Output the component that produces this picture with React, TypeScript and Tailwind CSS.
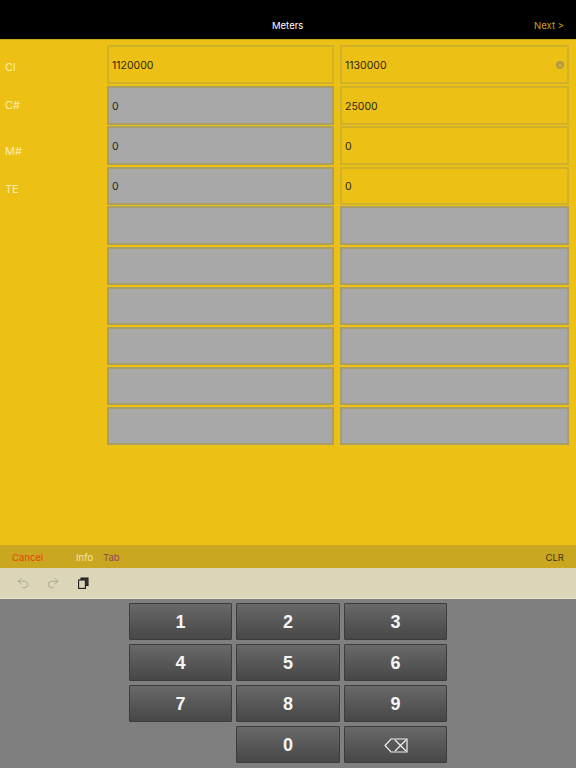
import { Undo2, Redo2 } from 'lucide-react'

const ROWS = [
  { h: 'h-[39px]', mt: 'mt-[5px]', label: 'Cl', labelPt: 'pt-[17px]', left: '1120000', right: '1130000', leftOn: true, rightOn: true, clear: true },
  { h: 'h-[39px]', mt: 'mt-[2px]', label: 'C#', labelPt: 'pt-[14px]', left: '0', right: '25000', rightOn: true },
  { h: 'h-[39px]', mt: 'mt-[1px]', label: 'M#', labelPt: 'pt-[20px]', left: '0', right: '0', rightOn: true },
  { h: 'h-[38px]', mt: 'mt-[2px]', label: 'TE', labelPt: 'pt-[17px]', left: '0', right: '0', rightOn: true },
  { h: 'h-[39px]', mt: 'mt-[1px]' },
  { h: 'h-[38px]', mt: 'mt-[2px]' },
  { h: 'h-[38px]', mt: 'mt-[2px]' },
  { h: 'h-[38px]', mt: 'mt-[2px]' },
  { h: 'h-[38px]', mt: 'mt-[2px]' },
  { h: 'h-[38px]', mt: 'mt-[2px]' },
]

const KEYS = ['1', '2', '3', '4', '5', '6', '7', '8', '9', '', '0', 'del']

function Field({ value, on, clear }: { value?: string; on?: boolean; clear?: boolean }) {
  return (
    <div className={`flex items-center justify-between border-2 pl-[3px] pr-[3px] text-[10.5px] text-[#2c2610] ${on ? 'border-[#d0b22a] bg-[#edc016]' : 'border-[#a89f68] bg-[#a8a8a8]'}`}>
      <span className="translate-y-[1px]">{value}</span>
      {clear && (
        <span className="flex h-[8px] w-[8px] items-center justify-center rounded-full bg-[#b39a45] text-[7px] leading-none text-[#e6c02a]">×</span>
      )}
    </div>
  )
}

function BackspaceIcon() {
  return (
    <svg width="24" height="15" viewBox="0 0 24 15" fill="none" stroke="#f2f2f2" strokeWidth="1.2">
      <path d="M7 1 H23 V14 H7 L1 7.5 Z" />
      <path d="M11 2 L22 13 M22 2 L11 13" />
    </svg>
  )
}

function Key({ k }: { k: string }) {
  if (!k) return <div />
  return (
    <div className="flex items-center justify-center rounded-[1px] border border-[#3c3c3c] bg-gradient-to-b from-[#696969] to-[#474747] pt-[1px] font-['Liberation_Sans',Arial,sans-serif] text-[18px] font-bold text-[#f5f5f5]">
      {k === 'del' ? <BackspaceIcon /> : k}
    </div>
  )
}

export default function App() {
  return (
    <div className="flex h-[768px] w-[576px] flex-col overflow-hidden bg-[#edc016] font-['Inter',sans-serif]">
      <header className="flex h-[40px] shrink-0 items-center justify-between border-b border-[#c9a51a] bg-black pl-[272px] pr-[12px] text-[9.5px]">
        <span className="pt-[13px] text-white">Meters</span>
        <span className="pt-[13px] text-[#c9a520]">Next &gt;</span>
      </header>

      <main className="flex h-[505px] shrink-0 flex-col">
        {ROWS.map((r, i) => (
          <div key={i} className={`grid grid-cols-[107px_227px_235px] ${r.h} ${r.mt}`}>
            <div className={`pl-[5px] text-[11px] leading-none text-[#fdeeaa] ${r.labelPt}`}>{r.label}</div>
            <Field value={r.left} on={r.leftOn} />
            <div className="pl-[6px]">
              <div className="grid h-full">
                <Field value={r.right} on={r.rightOn} clear={r.clear} />
              </div>
            </div>
          </div>
        ))}
      </main>

      <div className="flex h-[23px] shrink-0 items-center justify-between bg-[#c9a721] px-[12px] pt-[3px] text-[9.5px]">
        <div className="flex items-center">
          <span className="w-[64px] text-[#e8440c]">Cancel</span>
          <span className="w-[27px] text-[#f5e6a6]">Info</span>
          <span className="text-[#8a4a55]">Tab</span>
        </div>
        <span className="text-[#3d3312]">CLR</span>
      </div>

      <div className="flex h-[31px] shrink-0 items-center gap-[16px] border-b border-[#e6e2cc] bg-[#dbd6b8] pl-[16px]">
        <Undo2 size={14} strokeWidth={1} className="text-[#8c8a78]" />
        <Redo2 size={14} strokeWidth={1} className="text-[#8c8a78]" />
        <svg className="ml-[2px]" width="11" height="12" viewBox="0 0 11 12" fill="none" stroke="#1c1c1c" strokeWidth="1.1">
          <path d="M3 3 V1 H10 V8.5 H8" fill="#3a3a3a" />
          <rect x="0.6" y="3" width="6.8" height="8.4" fill="#dbd6b8" />
        </svg>
      </div>

      <div className="flex flex-1 bg-[#7f7f7f] pl-[129px] pt-[4px]">
        <div className="grid h-[160px] grid-cols-[103px_104px_103px] grid-rows-[37px_37px_37px_37px] gap-x-[4px] gap-y-[4px]">
          {KEYS.map((k, i) => (
            <Key key={i} k={k} />
          ))}
        </div>
      </div>
    </div>
  )
}
